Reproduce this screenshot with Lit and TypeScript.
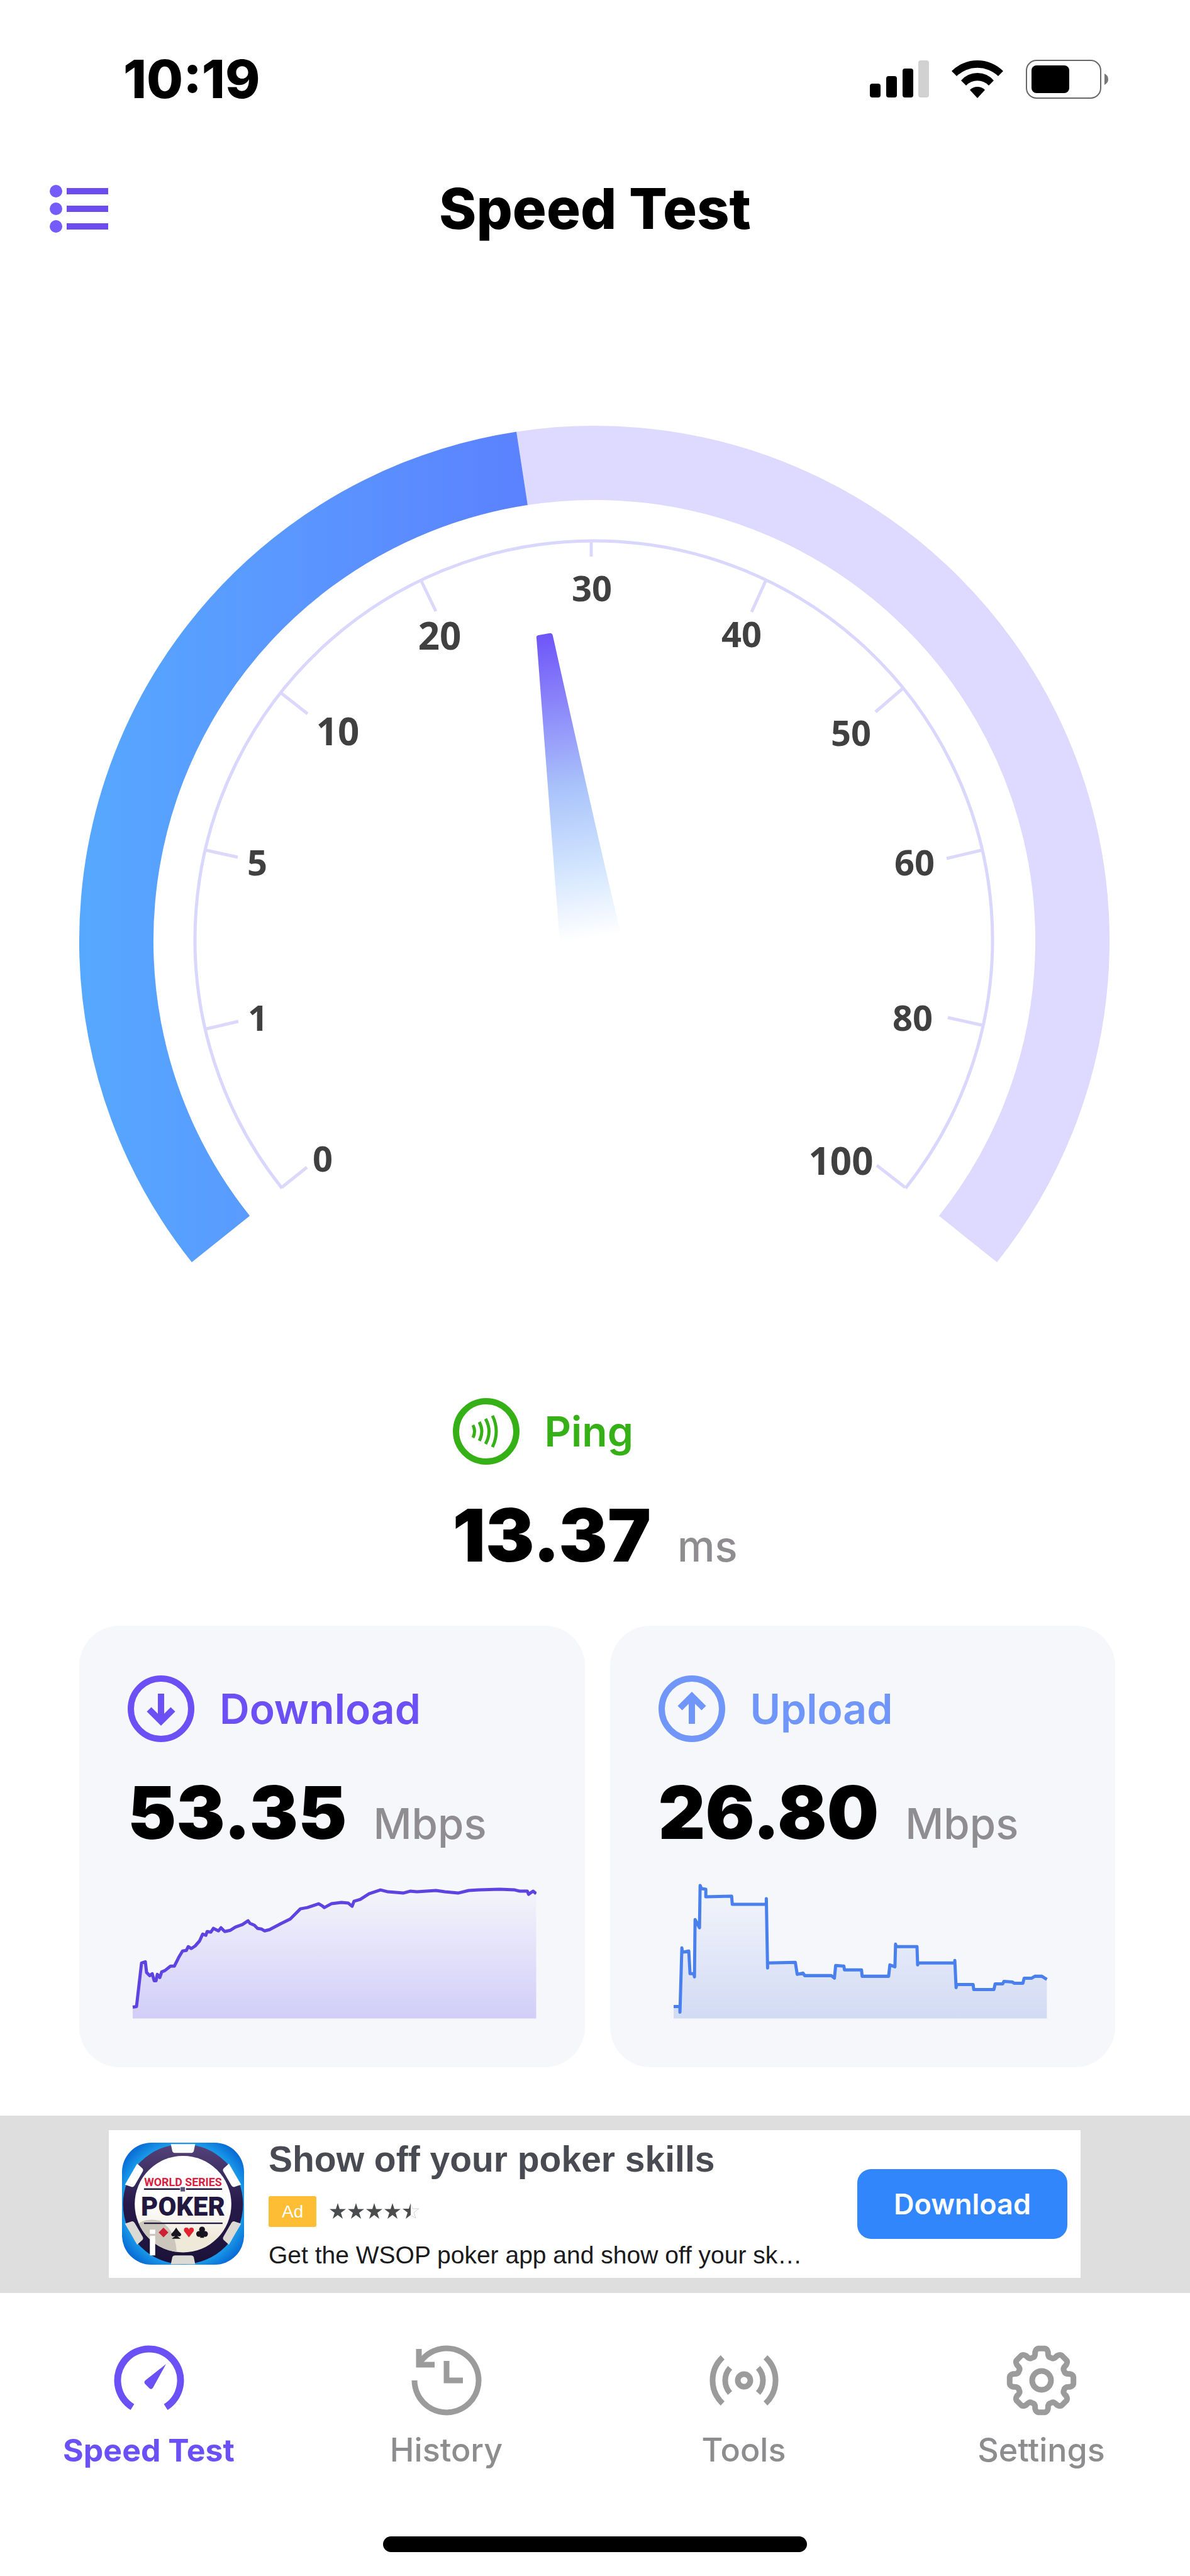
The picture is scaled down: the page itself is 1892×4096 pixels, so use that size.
import { LitElement, html, svg, css } from "lit";

const sans = css`Inter, "Liberation Sans", sans-serif`;

const ticks = [
  { label: '0', line: [322, 1212, 362, 1180], x: 387, y: 1187 },
  { label: '1', line: [202, 960, 253, 948], x: 284, y: 963 },
  { label: '5', line: [202, 676, 252, 687], x: 283, y: 716 },
  { label: '10', line: [321, 426, 363, 459], x: 411, y: 509, large: true },
  { label: '20', line: [543, 246, 567, 296], x: 573, y: 357, large: true },
  { label: '30', line: [814, 183, 814, 209], x: 815, y: 280 },
  { label: '40', line: [1092, 246, 1069, 297], x: 1053, y: 353 },
  { label: '50', line: [1310, 418, 1266, 456], x: 1227, y: 510 },
  { label: '60', line: [1434, 676, 1379, 689], x: 1328, y: 716 },
  { label: '80', line: [1435, 954, 1381, 942], x: 1325, y: 963 },
  { label: '100', line: [1313, 1212, 1268, 1177], x: 1211, y: 1192, large: true },
];

const downloadPoints = `8,212 14,211 22,142 28,140 30,157 35,162 39,159 42,170 45,170 47,160 51,165 54,156
  59,154 68,147 74,147 81,133 87,123 93,122 96,116 101,119 107,115 114,107 119,96 124,98 126,92 132,93
  136,87 144,91 148,86 154,92 163,90 171,85 182,81 191,75 194,79 201,82 206,87 212,88 217,91 225,89
  242,80 258,72 274,56 285,54 303,48 308,51 312,54 323,48 339,46 350,47 356,52 359,44 369,41 383,32
  401,26 413,29 437,31 448,28 459,29 489,27 503,29 524,31 541,27 557,26 590,25 614,26 622,28 634,28
  636,33 643,28 648,32`;

const uploadPoints = `24,211 34,211 34,220 37,118 38,125 48,123 50,159 56,159 57,164 58,73 65,86 66,19 68,24
  75,25 75,37 116,36 117,49 171,49 171,40 173,150 173,142 217,141 220,160 229,158 232,162 274,162
  279,166 281,146 294,147 295,153 322,153 323,163 365,163 367,145 375,148 376,112 377,116 410,116
  411,145 412,142 470,142 470,138 472,181 473,176 499,176 500,184 532,184 534,175 546,175 548,171
  561,172 564,174 578,174 580,166 592,166 597,163 608,163 616,168`;

// point on a circle, angle in degrees clockwise from the top
const polar = (cx: number, cy: number, r: number, deg: number) => {
  const a = (deg * Math.PI) / 180;
  return `${(cx + r * Math.sin(a)).toFixed(1)} ${(cy - r * Math.cos(a)).toFixed(1)}`;
};

const arc = (cx: number, cy: number, r: number, from: number, to: number) =>
  `M${polar(cx, cy, r, from)} A${r} ${r} 0 ${to - from > 180 ? 1 : 0} 1 ${polar(cx, cy, r, to)}`;

const gearPath = () => {
  let d = '';
  for (let i = 0; i < 8; i++) {
    const a = i * 45;
    d += `${i ? 'L' : 'M'}${polar(56, 56, 46, a - 13)}`;
    d += ` Q${polar(56, 56, 51, a - 10)} ${polar(56, 56, 51, a - 6)}`;
    d += ` L${polar(56, 56, 51, a + 6)}`;
    d += ` Q${polar(56, 56, 51, a + 10)} ${polar(56, 56, 46, a + 13)}`;
    d += ` Q${polar(56, 56, 38, a + 15)} ${polar(56, 56, 39, a + 22.5)}`;
    d += ` Q${polar(56, 56, 38, a + 30)} ${polar(56, 56, 46, a + 32)}`;
  }
  return d + 'Z';
};

const pingIcon = svg`
  <circle cx="53" cy="53" r="48" />
  <g stroke-width="5">
    <path d="M32 43 Q37 53 32 63" />
    <path d="M42 38 Q50 53 42 68" />
    <path d="M52 33 Q63 53 52 73" />
    <path d="M63 28 Q75 53 63 78" />
  </g>
`;

const downIcon = svg`
  <circle cx="53" cy="53" r="48" />
  <path d="M53 29 V72 M34 54 L53 73 L72 54" />
`;

const upIcon = svg`
  <circle cx="53" cy="53" r="48" />
  <path d="M53 77 V34 M34 52 L53 33 L72 52" />
`;

const tabs = [
  {
    label: 'Speed Test',
    icon: svg`
      <path d=${arc(56, 56, 50, -148, 148)} stroke-width="11" />
      <path d="M83 30 L50 56 Q47 59 50 62 L57 69 Q60 71 62 68 Z" fill="currentColor" stroke="none" />
    `,
  },
  {
    label: 'History',
    icon: svg`
      <path d="M5 56 A51 51 0 1 0 14 27" />
      <path d="M12 6 V31 H37 M56 25 V56 H82" stroke-linejoin="miter" />
    `,
  },
  {
    label: 'Tools',
    icon: svg`
      <circle cx="56" cy="56" r="10" />
      <path d=${arc(56, 56, 30, 48, 132)} />
      <path d=${arc(56, 56, 30, 228, 312)} />
      <path d=${arc(56, 56, 50, 43, 137)} />
      <path d=${arc(56, 56, 50, 223, 317)} />
    `,
  },
  {
    label: 'Settings',
    icon: svg`
      <path d=${gearPath()} />
      <circle cx="56" cy="56" r="15" />
    `,
  },
];

class SpeedGauge extends LitElement {
  static styles = css`
    :host {
      display: block;
    }
    .gauge {
      display: block;
      width: 100%;
      overflow: visible;
    }
    .label {
      font: 700 56px "Open Sans", "Noto Sans", sans-serif;
      fill: #404040;
      text-anchor: middle;
    }
    .large {
      font-size: 60px;
    }
  `;

  render() {
    return html`
      <svg class="gauge" viewBox="0 0 1638 1330" role="img" aria-label="Speed gauge">
        <defs>
          <linearGradient id="progress" gradientUnits="userSpaceOnUse" x1="0" y1="0" x2="710" y2="0">
            <stop offset="0" stop-color="#56a8ff" />
            <stop offset="0.45" stop-color="#5a98ff" />
            <stop offset="1" stop-color="#5b81ff" />
          </linearGradient>
          <linearGradient id="needle" gradientUnits="userSpaceOnUse" x1="740" y1="332" x2="812" y2="816">
            <stop offset="0" stop-color="#6e55f8" />
            <stop offset="0.24" stop-color="#8c88fa" />
            <stop offset="0.5" stop-color="#a9c2fa" />
            <stop offset="0.75" stop-color="#cfe3fe" />
            <stop offset="1" stop-color="#ffffff" />
          </linearGradient>
        </defs>
        <g fill="none">
          <path d=${arc(819, 820, 760, -8.7, 128.6)} stroke="#ded9fe" stroke-width="118" />
          <path d=${arc(819, 820, 760, -128.6, -8.7)} stroke="url(#progress)" stroke-width="118" />
          <path d=${arc(818, 818, 634, -128.6, 128.6)} stroke="#d9d7fd" stroke-width="5" />
        </g>
        ${ticks.map(({ label, line, x, y, large }) => svg`
          <line x1=${line[0]} y1=${line[1]} x2=${line[2]} y2=${line[3]} stroke="#dcd8fb" stroke-width="5" />
          <text class="label ${large ? 'large' : ''}" x=${x} y=${y}>${label}</text>
        `)}
        <path
          d="M727 339 Q726 335 730 334 L747 331 Q752 330 753 335 Q832 690 862 812 L764 822 Z"
          fill="url(#needle)"
        />
      </svg>
    `;
  }
}

customElements.define('speed-gauge', SpeedGauge);

class SpeedMetric extends LitElement {
  static properties = {
    name: {},
    value: {},
    unit: {},
    icon: { attribute: false },
  };

  static styles = css`
    :host {
      display: flex;
      flex-direction: column;
      gap: 52px;
    }
    .heading {
      display: flex;
      align-items: center;
      gap: 40px;
    }
    .icon {
      width: 106px;
      height: 106px;
      fill: none;
      stroke: currentColor;
      stroke-width: 10px;
    }
    .name {
      margin: 0;
      font: 600 66px/80px ${sans};
    }
    .reading {
      display: flex;
      align-items: baseline;
      gap: 42px;
      margin: 0;
      font: 900 116px/120px ${sans};
      color: #000;
    }
    .unit {
      font-size: 67px;
      font-weight: 500;
      line-height: 60px;
      color: #8f8d90;
    }
  `;

  render() {
    return html`
      <div class="heading">
        <svg class="icon" viewBox="0 0 106 106" aria-hidden="true">${this.icon}</svg>
        <h2 class="name">${this.name}</h2>
      </div>
      <p class="reading">${this.value}<span class="unit">${this.unit}</span></p>
    `;
  }
}

customElements.define('speed-metric', SpeedMetric);

class SpeedChart extends LitElement {
  static properties = {
    points: {},
    line: {},
    fill: {},
  };

  static styles = css`
    :host {
      display: block;
    }
    .chart {
      display: block;
      width: 100%;
    }
  `;

  render() {
    const list = this.points.trim().split(/\s+/);
    const start = list[0].split(',')[0];
    const end = list[list.length - 1].split(',')[0];
    return html`
      <svg class="chart" viewBox="0 0 648 230" aria-hidden="true">
        <linearGradient id="area" x1="0" y1="0" x2="0" y2="1">
          <stop offset="0" stop-color=${this.fill} stop-opacity="0.06" />
          <stop offset="1" stop-color=${this.fill} />
        </linearGradient>
        <polygon points="${start},230 ${this.points} ${end},230" fill="url(#area)" />
        <polyline points=${this.points} fill="none" stroke=${this.line} stroke-width="5" stroke-linejoin="round" />
      </svg>
    `;
  }
}

customElements.define('speed-chart', SpeedChart);

class PromoBanner extends LitElement {
  static styles = css`
    :host {
      display: block;
      padding: 23px 174px 24px 173px;
      background: #dededf;
      font-family: "Liberation Sans", Arial, sans-serif;
    }
    .card {
      display: flex;
      align-items: center;
      gap: 39px;
      padding: 14px 21px;
      background: #fff;
    }
    .logo {
      flex: none;
      width: 194px;
      height: 194px;
    }
    .copy {
      flex: 1;
      min-width: 0;
    }
    .title {
      margin: 0;
      font-size: 57px;
      line-height: 64px;
      color: #4a4a52;
    }
    .meta {
      display: flex;
      align-items: center;
      gap: 21px;
      margin: 27px 0 23px;
    }
    .badge {
      padding: 0 21px;
      border-radius: 3px;
      background: #fdbd35;
      color: #fff;
      font-size: 28px;
      line-height: 49px;
    }
    .stars {
      width: 145px;
      height: 28px;
    }
    .text {
      margin: 0;
      font-size: 39px;
      line-height: 44px;
      color: #1b1b1d;
      white-space: nowrap;
    }
    .action {
      flex: none;
      width: 334px;
      height: 111px;
      padding: 0;
      border: 0;
      border-radius: 22px;
      background: #3286fb;
      color: #fff;
      font: 600 45px/1 ${sans};
    }
    .series {
      font: 700 23px Roboto, sans-serif;
      fill: #d9203f;
      text-anchor: middle;
    }
    .poker {
      font: 900 54px Roboto, sans-serif;
      fill: #22173f;
      text-anchor: middle;
    }
  `;

  star(i: number) {
    return svg`
      <path transform="translate(${i * 29} 1)"
        d="M13 0 L16 9.500 H26 L18 15.500 L21 25 L13 19 L5 25 L8 15.500 L0 9.500 H10 Z" />
    `;
  }

  renderLogo() {
    return html`
      <svg class="logo" viewBox="0 0 250 250" role="img" aria-label="World Series of Poker">
        <defs>
          <radialGradient id="sky" cx="0.5" cy="0.5" r="0.72">
            <stop offset="0.6" stop-color="#22b4f5" />
            <stop offset="0.82" stop-color="#0a6fd6" />
            <stop offset="1" stop-color="#0746a8" />
          </radialGradient>
          <linearGradient id="chip" x1="0" y1="0" x2="0" y2="1">
            <stop offset="0" stop-color="#54437a" />
            <stop offset="0.5" stop-color="#261a4a" />
            <stop offset="1" stop-color="#1b1238" />
          </linearGradient>
          <linearGradient id="face" x1="0" y1="0" x2="0" y2="1">
            <stop offset="0.5" stop-color="#fff" />
            <stop offset="0.85" stop-color="#efe9da" />
          </linearGradient>
          <clipPath id="disc"><circle cx="125" cy="126" r="99" /></clipPath>
        </defs>
        <rect width="250" height="250" rx="60" fill="url(#sky)" />
        <circle cx="125" cy="126" r="123" fill="url(#chip)" />
        ${[0, 60, 120, 180, 240, 300].map((deg) => svg`
          <path
            d="M100 3 H150 L147 17 Q146 21 141 21 H109 Q104 21 103 17 Z"
            fill=${deg > 90 && deg < 270 ? '#dcdad4' : '#fff'}
            transform="rotate(${deg} 125 126)"
          />
        `)}
        <circle cx="125" cy="126" r="99" fill="url(#face)" />
        <path d="M26 172 Q44 152 78 160 Q112 180 112 230 H26 Z" fill="#cbc7bd" clip-path="url(#disc)" />
        <text class="series" x="125" y="89">WORLD SERIES</text>
        <path d="M45 95 H119 M131 95 H205 M45 165 H206" stroke="#22173f" stroke-width="3" />
        <rect x="120" y="91" width="9" height="9" fill="#5b5278" />
        <text class="poker" x="125" y="150">POKER</text>
        <path d="M85 174 L95 184 L85 194 L75 184 Z" fill="#cf2033" />
        <path d="M111 174 Q115 181 121 187 Q122 194 113 191 L120 197 H102 L109 191 Q100 194 101 187 Q107 181 111 174 Z" fill="#17131f" />
        <path d="M137 194 L127 181 Q126 174 132 174 Q136 174 137 178 Q138 174 142 174 Q148 174 147 181 Z" fill="#e3222f" />
        <g fill="#17131f">
          <circle cx="164" cy="178" r="6" />
          <circle cx="158" cy="187" r="6" />
          <circle cx="170" cy="187" r="6" />
          <path d="M162 182 H166 L168 195 H160 Z" />
        </g>
        <path d="M57 178 H68 V187 H57 Z M57 191 H68 V231 H57 Z" fill="#fff" />
      </svg>
    `;
  }

  render() {
    return html`
      <div class="card">
        ${this.renderLogo()}
        <div class="copy">
          <h2 class="title">Show off your poker skills</h2>
          <div class="meta">
            <span class="badge">Ad</span>
            <svg class="stars" viewBox="0 0 145 28" role="img" aria-label="4.5 stars" fill="#4a4c4d">
              ${[0, 1, 2, 3].map((i) => this.star(i))}
              <path d="M129 1 V20 L121 26 L124 16 L116 10 H126 Z" />
              <path d="M129 3 L132 10 H142 L134 16 L137 25 L130 21" fill="none" stroke="#d4d4d4" />
            </svg>
          </div>
          <p class="text">Get the WSOP poker app and show off your sk…</p>
        </div>
        <button class="action" type="button">Download</button>
      </div>
    `;
  }
}

customElements.define('promo-banner', PromoBanner);

class AppRoot extends LitElement {
  static styles = css`
    :host {
      display: block;
      background: #fff;
      color: #000;
      font-family: ${sans};
      font-optical-sizing: none;
    }
    .status {
      display: flex;
      align-items: center;
      justify-content: space-between;
      height: 100px;
      padding: 76px 130px 0 196px;
    }
    .time {
      font-size: 84px;
      font-weight: 800;
      line-height: 100px;
    }
    .indicators {
      display: flex;
      align-items: center;
      gap: 36px;
    }
    .header {
      display: grid;
      grid-template-columns: 1fr auto 1fr;
      align-items: center;
      padding: 96px 79px 0;
    }
    .menu {
      justify-self: start;
      display: block;
      padding: 0;
      border: 0;
      background: none;
    }
    .menu svg {
      display: block;
    }
    .heading {
      margin: 0;
      font-size: 90px;
      font-weight: 800;
      line-height: 120px;
    }
    .dial {
      padding: 284px 128px 0 126px;
    }
    .ping {
      width: fit-content;
      margin: 217px auto 0;
      color: #35b016;
    }
    .cards {
      display: grid;
      grid-template-columns: 1fr 1fr;
      gap: 40px;
      padding: 84px 119px 77px 126px;
    }
    .card {
      padding: 79px 77px 77px;
      border-radius: 64px;
      background: #f6f7fb;
    }
    .download {
      color: #6c50f6;
    }
    .upload {
      color: #7096fa;
    }
    .chart {
      margin-top: 37px;
    }
    .tabs {
      display: grid;
      grid-template-columns: repeat(4, 1fr);
      padding-top: 83px;
    }
    .tab {
      display: flex;
      flex-direction: column;
      align-items: center;
      gap: 25px;
      color: #8d8d8f;
      font-size: 52px;
      font-weight: 500;
      line-height: 60px;
      text-decoration: none;
    }
    .tab svg {
      width: 112px;
      height: 112px;
      color: #9c9b9b;
      fill: none;
      stroke: currentColor;
      stroke-width: 9px;
      stroke-linejoin: round;
    }
    .active,
    .active svg {
      color: #6b50f5;
    }
    .active {
      font-size: 50px;
      font-weight: 700;
    }
    .home {
      width: 674px;
      height: 25px;
      margin: 107px auto 42px;
      border-radius: 13px;
      background: #000;
    }
  `;

  renderStatus() {
    return html`
      <div class="status">
        <span class="time">10:19</span>
        <div class="indicators">
          <svg width="94" height="60" viewBox="0 0 94 60" aria-hidden="true">
            <rect y="37" width="17" height="22" rx="4" />
            <rect x="26" y="25" width="17" height="34" rx="4" />
            <rect x="52" y="13" width="17" height="46" rx="4" />
            <rect x="77" width="17" height="59" rx="4" fill="#d1d1d1" />
          </svg>
          <svg width="82" height="60" viewBox="0 0 82 60" aria-hidden="true">
            <path d="M0 17 A58 58 0 0 1 82 17 L74 25 A48 48 0 0 0 8 25 Z" />
            <path d="M15 32 A34 34 0 0 1 67 32 L59 40 A25 25 0 0 0 23 40 Z" />
            <path d="M29 47 A17 17 0 0 1 53 47 L41 60 Z" />
          </svg>
          <svg width="131" height="62" viewBox="0 0 131 62" aria-hidden="true">
            <rect x="1" y="1" width="118" height="60" rx="16" fill="none" stroke="#6b6666" stroke-width="2" />
            <rect x="9" y="9" width="60" height="44" rx="8" />
            <path d="M125 22 Q131 25 131 31 Q131 37 125 40 Z" fill="#777" />
          </svg>
        </div>
      </div>
    `;
  }

  render() {
    return html`
      ${this.renderStatus()}
      <header class="header">
        <button class="menu" type="button" aria-label="Menu">
          <svg width="93" height="76" viewBox="0 0 93 76" aria-hidden="true">
            ${[10, 38, 66].map((y) => svg`
              <circle cx="10" cy=${y} r="10" fill="#755bfa" />
              <rect x="27" y=${y - 5} width="66" height="10" fill="#6c4cec" />
            `)}
          </svg>
        </button>
        <h1 class="heading">Speed Test</h1>
      </header>
      <main>
        <speed-gauge class="dial"></speed-gauge>
        <speed-metric class="ping" name="Ping" value="13.37" unit="ms" .icon=${pingIcon}></speed-metric>
        <div class="cards">
          <section class="card">
            <speed-metric class="download" name="Download" value="53.35" unit="Mbps" .icon=${downIcon}></speed-metric>
            <speed-chart class="chart" points=${downloadPoints} line="#5f43e2" fill="#d1cdf8"></speed-chart>
          </section>
          <section class="card">
            <speed-metric class="upload" name="Upload" value="26.80" unit="Mbps" .icon=${upIcon}></speed-metric>
            <speed-chart class="chart" points=${uploadPoints} line="#4a80ee" fill="#d2dbf5"></speed-chart>
          </section>
        </div>
      </main>
      <promo-banner></promo-banner>
      <nav class="tabs">
        ${tabs.map(({ label, icon }, i) => html`
          <a class="tab ${i === 0 ? 'active' : ''}" href="#">
            <svg viewBox="0 0 112 112" aria-hidden="true">${icon}</svg>
            ${label}
          </a>
        `)}
      </nav>
      <div class="home"></div>
    `;
  }
}

customElements.define('app-root', AppRoot);
